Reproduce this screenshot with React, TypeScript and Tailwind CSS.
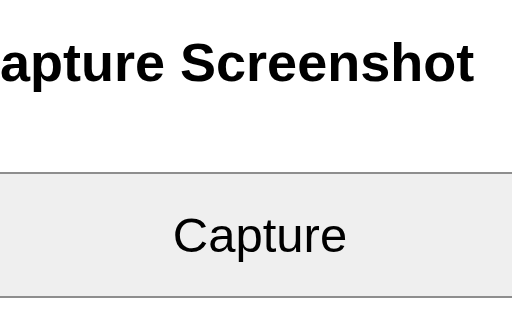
export default function App() {
  return (
    <div
      className="w-[512px] h-[320px] overflow-hidden bg-white"
      style={{ fontFamily: '"Liberation Sans", Arial, sans-serif' }}
    >
      <h2 className="ml-[-39px] mt-[35px] text-[54px] font-bold leading-none text-black whitespace-nowrap">
        Capture Screenshot
      </h2>
      <button
        type="button"
        className="mt-[83px] ml-[-20px] w-[560px] h-[126px] flex items-center justify-center border-y-2 border-[#8e8e8e] bg-[#efefef] text-[49px] leading-none text-black"
      >
        Capture
      </button>
    </div>
  );
}
